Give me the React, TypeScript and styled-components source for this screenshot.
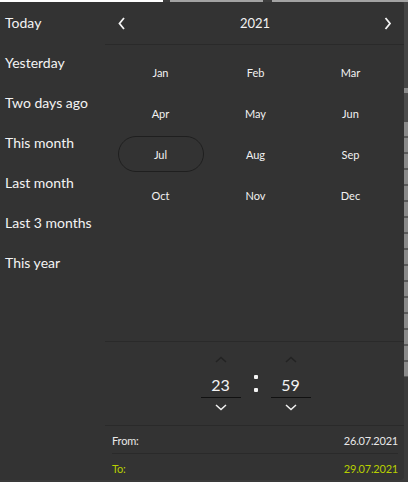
import styled, { createGlobalStyle } from "styled-components";

const GlobalStyle = createGlobalStyle`
  html, body {
    margin: 0;
    padding: 0;
  }
  body {
    padding-top: 2px;
    font-family: Lato, "Noto Sans", sans-serif;
    background: linear-gradient(
      to right,
      #ffffff 0 163px,
      #3c3c3c 163px 170px,
      #a3a3a3 170px 263px,
      #3c3c3c 263px 272px,
      #a3a3a3 272px
    ) top / 100% 2px no-repeat, #3a3a3a;
  }
`;

const Page = styled.div`
  display: flex;
  align-items: stretch;
`;

const Popover = styled.div`
  display: flex;
  width: 404px;
  height: 478px;
  background: #333333;
  border-radius: 0 4px 4px 0;
  color: #f2f2f2;
  overflow: hidden;
`;

const Backdrop = styled.div`
  flex: 1;
  height: 478px;
  background:
    linear-gradient(#444 0 86px, #8a8a8a 86px 91px, #4c4c4c 91px 120px, transparent 120px),
    repeating-linear-gradient(#8a8a8a 0 14px, #5a5a5a 14px 16px) 0 120px / 100% 255px no-repeat,
    #3a3a3a;
`;

const Presets = styled.ul`
  list-style: none;
  margin: 0;
  padding: 0;
  width: 105px;
  flex-shrink: 0;
`;

const Preset = styled.li`
  height: 40px;
  display: flex;
  align-items: center;
  padding-left: 5px;
  font-size: 14px;
  color: #f4f4f4;
  white-space: nowrap;
`;

const Calendar = styled.div`
  flex: 1;
  display: flex;
  flex-direction: column;
`;

const Header = styled.div`
  height: 42px;
  display: flex;
  align-items: center;
  justify-content: space-between;
  padding: 0 13px 0 13px;
  border-bottom: 1px solid #2a2a2a;
  font-size: 13px;
`;

const NavButton = styled.button`
  background: none;
  border: 0;
  padding: 0;
  width: 8px;
  height: 16px;
  display: flex;
  align-items: center;
  justify-content: center;
  color: #f4f4f4;
  cursor: pointer;
`;

const MonthGrid = styled.div`
  flex: 1;
  display: grid;
  grid-template-columns: repeat(3, 95px);
  grid-auto-rows: 36px;
  row-gap: 5px;
  align-content: start;
  padding: 9px 7px 0 8px;
  border-bottom: 1px solid #2a2a2a;
`;

const Month = styled.div<{ $selected?: boolean }>`
  justify-self: center;
  width: 86px;
  display: flex;
  align-items: center;
  justify-content: center;
  font-size: 11px;
  color: #f2f2f2;
  border-radius: 18px;
  border: 1px solid ${(p) => (p.$selected ? "#1f1f1f" : "transparent")};
  box-sizing: border-box;
`;

const TimeSection = styled.div`
  height: 83px;
  display: flex;
  align-items: center;
  justify-content: center;
  gap: 13px;
  padding-left: 1px;
  border-bottom: 1px solid #2a2a2a;
`;

const Spinner = styled.div`
  display: flex;
  flex-direction: column;
  align-items: center;
  width: 40px;
`;

const Arrow = styled.button<{ $disabled?: boolean }>`
  background: none;
  border: 0;
  padding: 0;
  height: 12px;
  width: 20px;
  display: flex;
  align-items: center;
  justify-content: center;
  color: ${(p) => (p.$disabled ? "#232323" : "#f0f0f0")};
`;

const Value = styled.div`
  box-sizing: border-box;
  width: 40px;
  height: 32px;
  padding-bottom: 3px;
  margin-bottom: 4px;
  display: flex;
  align-items: flex-end;
  justify-content: center;
  font-size: 16px;
  line-height: 18px;
  color: #f4f4f4;
  border-bottom: 1px solid #111;
`;

const Colon = styled.div`
  display: flex;
  flex-direction: column;
  gap: 9px;
  & > span {
    width: 4px;
    height: 4px;
    border-radius: 1px;
    background: #f4f4f4;
  }
`;

const Summary = styled.div`
  padding: 0 7px;
`;

const SummaryRow = styled.div<{ $accent?: boolean }>`
  height: 27px;
  padding-top: 2px;
  box-sizing: border-box;
  display: flex;
  align-items: center;
  justify-content: space-between;
  font-size: 11px;
  letter-spacing: -0.2px;
  color: ${(p) => (p.$accent ? "#b7cf00" : "#e8e8e8")};
  & + & {
    border-top: 1px solid #2a2a2a;
  }
`;

const Chevron = ({ dir }: { dir: "left" | "right" | "up" | "down" }) => {
  const paths = {
    left: "M6 1 L1.5 6.5 L6 12",
    right: "M1.5 1 L6 6.5 L1.5 12",
  };
  if (dir === "left" || dir === "right") {
    return (
      <svg width="8" height="13" viewBox="0 0 8 13" fill="none">
        <path d={paths[dir]} stroke="currentColor" strokeWidth="1.8" />
      </svg>
    );
  }
  return (
    <svg width="12" height="7" viewBox="0 0 12 7" fill="none">
      <path
        d={dir === "up" ? "M1 6 L6 1.5 L11 6" : "M1 1 L6 5.5 L11 1"}
        stroke="currentColor"
        strokeWidth="1.5"
      />
    </svg>
  );
};

const presets = [
  "Today",
  "Yesterday",
  "Two days ago",
  "This month",
  "Last month",
  "Last 3 months",
  "This year",
];

const months = [
  "Jan", "Feb", "Mar",
  "Apr", "May", "Jun",
  "Jul", "Aug", "Sep",
  "Oct", "Nov", "Dec",
];

export function App() {
  return (
    <>
      <GlobalStyle />
      <Page>
        <Popover>
          <Presets>
            {presets.map((p) => (
              <Preset key={p}>{p}</Preset>
            ))}
          </Presets>
          <Calendar>
            <Header>
              <NavButton>
                <Chevron dir="left" />
              </NavButton>
              <span>2021</span>
              <NavButton>
                <Chevron dir="right" />
              </NavButton>
            </Header>
            <MonthGrid>
              {months.map((m) => (
                <Month key={m} $selected={m === "Jul"}>
                  {m}
                </Month>
              ))}
            </MonthGrid>
            <TimeSection>
              <Spinner>
                <Arrow $disabled>
                  <Chevron dir="up" />
                </Arrow>
                <Value>23</Value>
                <Arrow>
                  <Chevron dir="down" />
                </Arrow>
              </Spinner>
              <Colon>
                <span />
                <span />
              </Colon>
              <Spinner>
                <Arrow $disabled>
                  <Chevron dir="up" />
                </Arrow>
                <Value>59</Value>
                <Arrow>
                  <Chevron dir="down" />
                </Arrow>
              </Spinner>
            </TimeSection>
            <Summary>
              <SummaryRow>
                <span>From:</span>
                <span>26.07.2021</span>
              </SummaryRow>
              <SummaryRow $accent>
                <span>To:</span>
                <span>29.07.2021</span>
              </SummaryRow>
            </Summary>
          </Calendar>
        </Popover>
        <Backdrop />
      </Page>
    </>
  );
}

export default App;
